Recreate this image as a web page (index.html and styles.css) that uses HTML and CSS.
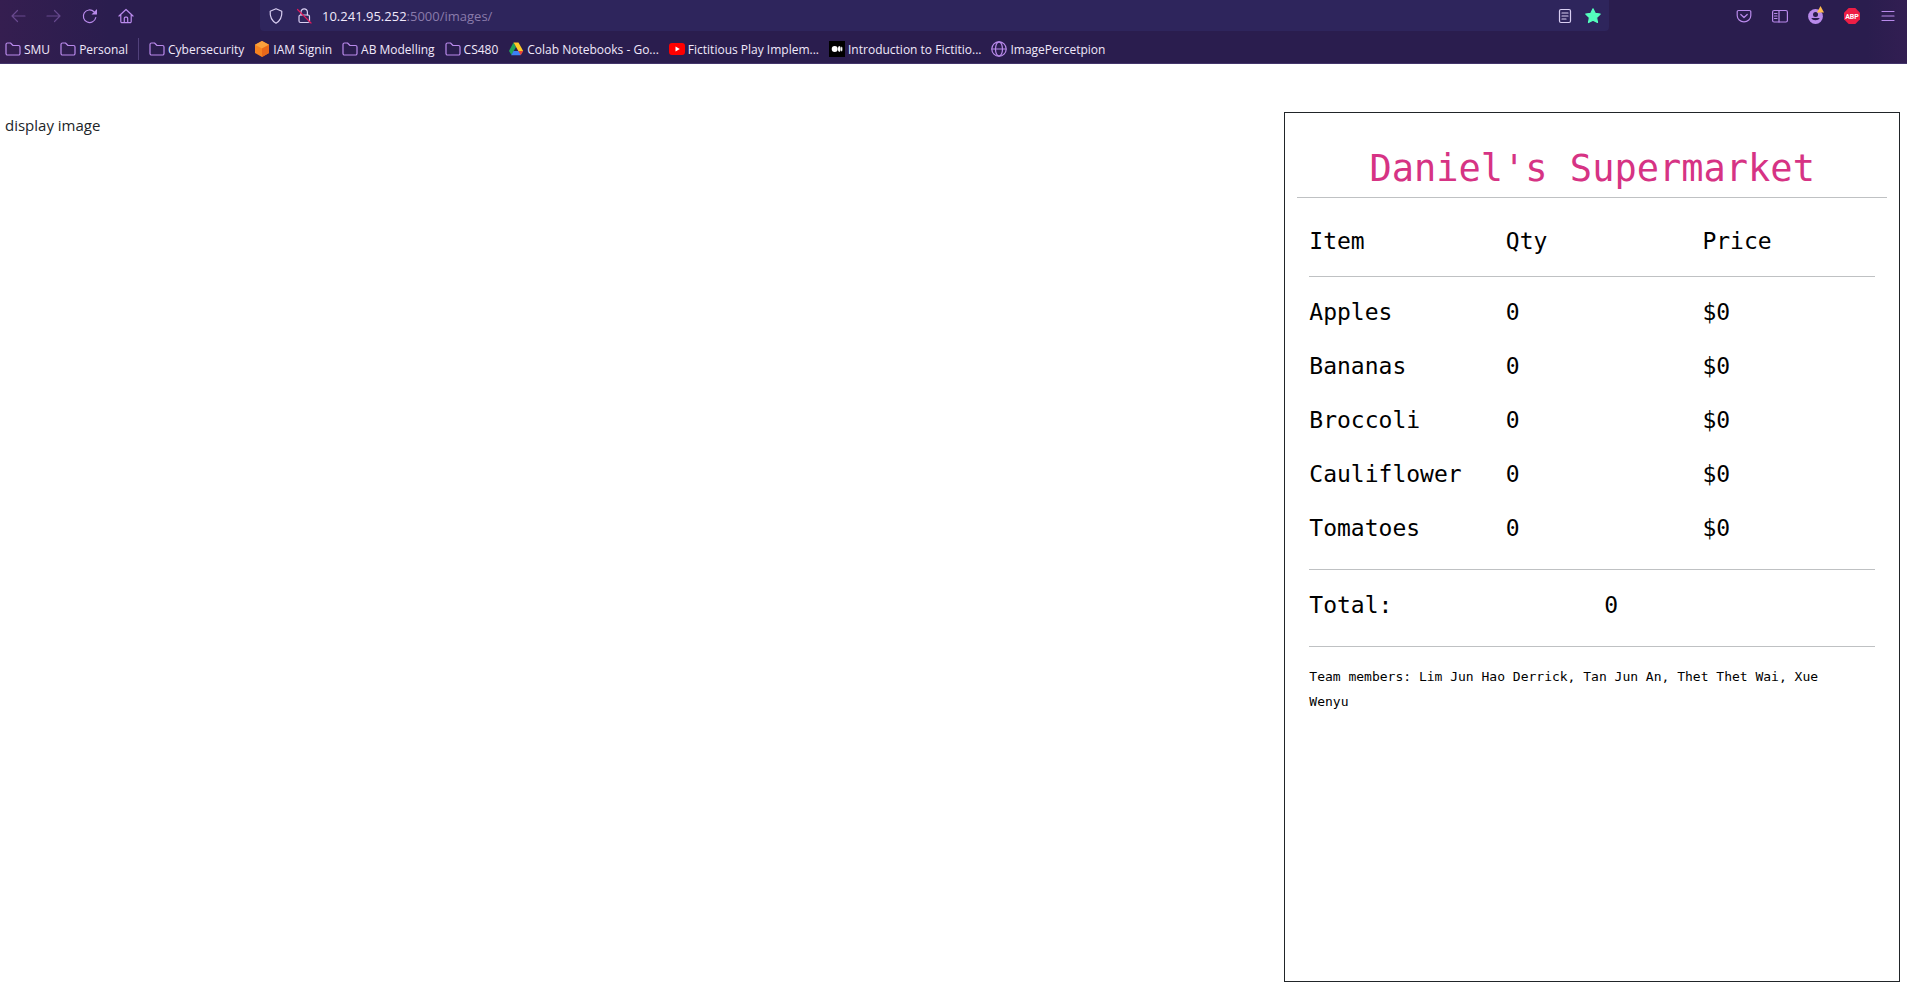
FILE: index.html
```html
<!DOCTYPE html>
<html lang="en">
<head>
<meta charset="utf-8">
<title>Daniel's Supermarket</title>
<link rel="stylesheet" href="styles.css">
</head>
<body>
<svg class="defs" aria-hidden="true">
  <symbol id="folder" viewBox="0 0 16 16"><path d="M1 12.500V3.500A1.500 1.500 0 0 1 2.500 2H5.500L8 4.500H13.500A1.500 1.500 0 0 1 15 6V12.500A1.500 1.500 0 0 1 13.500 14H2.500A1.500 1.500 0 0 1 1 12.500Z"/></symbol>
</svg>
<header class="chrome">
  <div class="toolbar">
    <nav class="tools tools-left">
      <button class="tool dim" aria-label="Back"><svg class="icon" viewBox="0 0 16 16"><path d="M15 8H2M7.500 2.500L2 8L7.500 13.500"/></svg></button>
      <button class="tool dim" aria-label="Forward"><svg class="icon" viewBox="0 0 16 16"><path d="M1 8H14M8.500 2.500L14 8L8.500 13.500"/></svg></button>
      <button class="tool" aria-label="Reload"><svg class="icon" viewBox="0 0 16 16"><path d="M13.800 9.500A6.300 6.300 0 1 1 12 3.700"/><path class="solid" d="M15 1V6.500H9.500Z"/></svg></button>
      <button class="tool" aria-label="Home"><svg class="icon" viewBox="0 0 16 16"><path d="M1 8L8 1.500L15 8M2.800 6.800V13.500A1.200 1.200 0 0 0 4 14.700H12A1.200 1.200 0 0 0 13.200 13.500V6.800M6.300 14.500V10.200A1 1 0 0 1 7.300 9.200H8.700A1 1 0 0 1 9.700 10.200V14.500"/></svg></button>
    </nav>
    <div class="urlbar">
      <button class="site" aria-label="Tracking protection"><svg class="icon pale" viewBox="0 0 16 16"><path d="M8 .8L13.800 3.200C14.200 8.500 12.500 12.500 8 15.200C3.500 12.500 1.800 8.500 2.200 3.200Z"/></svg></button>
      <button class="site" aria-label="Connection is not secure"><svg class="icon pale" viewBox="0 0 16 16"><rect x="3" y="7" width="10.500" height="7.500" rx="1.500"/><path d="M5 7V4A3.200 3.200 0 0 1 11.400 4V7"/><path class="slash" d="M1.500 1.500L15 15"/></svg></button>
      <div class="address" role="textbox" aria-label="Address" tabindex="0">10.241.95.252<span class="path">:5000/images/</span></div>
      <button class="site" aria-label="Reader view"><svg class="icon pale" viewBox="0 0 16 16"><rect x="2.500" y="1.500" width="11" height="13" rx="1.500"/><path d="M5 5H11M5 8H11M5 11H9"/></svg></button>
      <button class="site" aria-label="Edit bookmark"><svg class="icon" viewBox="0 0 16 16"><path class="star" d="M8 .8L10.200 5.300L15.200 6L11.600 9.500L12.500 14.500L8 12.200L3.500 14.500L4.400 9.500L.8 6L5.800 5.300Z"/></svg></button>
    </div>
    <nav class="tools tools-right">
      <button class="tool" aria-label="Pocket"><svg class="icon" viewBox="0 0 16 16"><path d="M2.500 2.500H13.500A1.300 1.300 0 0 1 14.800 3.800V7.500A6.800 6.300 0 0 1 1.200 7.500V3.800A1.300 1.300 0 0 1 2.500 2.500ZM4.800 6.500L8 9.500L11.200 6.500"/></svg></button>
      <button class="tool" aria-label="Sidebars"><svg class="icon" viewBox="0 0 16 16"><rect x=".6" y="2.500" width="14.800" height="11.500" rx="1.500"/><path d="M7 2.500V14M2.500 5.500H5M2.500 8H5M2.500 10.500H5"/></svg></button>
      <button class="tool" aria-label="Account"><svg class="icon" viewBox="0 0 16 16"><circle class="solid" cx="7.500" cy="8.500" r="7.400"/><circle class="hole" cx="7.500" cy="6.500" r="2.500"/><path class="hole" d="M3.200 10H11.800A4.600 3.500 0 0 1 3.200 10Z"/><path class="warn" d="M12.500 -2L16 4.500H9Z"/></svg></button>
      <button class="tool" aria-label="Adblock Plus"><svg class="icon" viewBox="0 0 16 16"><path class="abp" d="M4.700 0H11.300L16 4.700V11.300L11.300 16H4.700L0 11.300V4.700Z"/><text class="abp-text" x="8" y="10.600">ABP</text></svg></button>
      <button class="tool" aria-label="Menu"><svg class="icon" viewBox="0 0 16 16"><path d="M2 3.500H14M2 8H14M2 12.500H14"/></svg></button>
    </nav>
  </div>
  <nav class="bookmarks" aria-label="Bookmarks">
    <a class="bookmark" href="#"><svg class="icon"><use href="#folder"/></svg>SMU</a>
    <a class="bookmark" href="#"><svg class="icon"><use href="#folder"/></svg>Personal</a>
    <span class="divider"></span>
    <a class="bookmark" href="#"><svg class="icon"><use href="#folder"/></svg>Cybersecurity</a>
    <a class="bookmark" href="#"><svg class="icon flat" viewBox="0 0 16 16"><path fill="#f58220" d="M8 0L15 3.800V12L8 16L1 12V3.800Z"/><path fill="#f9a03c" d="M8 0L15 3.800L8 7.500L1 3.800Z"/><path fill="#e8681a" d="M15 3.800V12L8 16V7.500Z"/></svg>IAM Signin</a>
    <a class="bookmark" href="#"><svg class="icon"><use href="#folder"/></svg>AB Modelling</a>
    <a class="bookmark" href="#"><svg class="icon"><use href="#folder"/></svg>CS480</a>
    <a class="bookmark" href="#"><svg class="icon flat" viewBox="0 0 16 16"><path fill="#20a55a" d="M5.500 1.500L8 6L3.500 14L1 10Z"/><path fill="#ffc928" d="M5.500 1.500H10.500L15.200 10H10.300Z"/><path fill="#3d82f5" d="M5.500 10H15L12.500 14.300H3.200Z"/><path fill="#e94335" d="M10.300 10H15.200L12.700 14.300Z"/></svg>Colab Notebooks - Go...</a>
    <a class="bookmark" href="#"><svg class="icon flat" viewBox="0 0 16 16"><rect fill="#f00" y="2" width="16" height="12" rx="3"/><path fill="#fff" d="M6.500 5.500L10.800 8L6.500 10.500Z"/></svg>Fictitious Play Implem...</a>
    <a class="bookmark" href="#"><svg class="icon flat" viewBox="0 0 16 16"><path fill="#000" d="M0 0H16V16H0Z"/><circle fill="#fff" cx="5.700" cy="8" r="3"/><ellipse fill="#fff" cx="10.300" cy="8" rx="1.400" ry="2.900"/><ellipse fill="#fff" cx="12.700" cy="8" rx=".7" ry="2.500"/></svg>Introduction to Fictitio...</a>
    <a class="bookmark" href="#"><svg class="icon" viewBox="0 0 16 16"><circle cx="8" cy="8" r="7.200"/><ellipse cx="8" cy="8" rx="3.500" ry="7.200"/><path d="M1 8H15"/></svg>ImagePercetpion</a>
  </nav>
</header>
<main class="page">
  <section class="viewer">display image</section>
  <section class="receipt">
    <h1 class="shop">Daniel's Supermarket</h1>
    <table class="items">
      <thead>
        <tr><th colspan="2">Item</th><th colspan="2">Qty</th><th colspan="2">Price</th></tr>
        <tr class="rule rule-head"><td colspan="6"><hr></td></tr>
      </thead>
      <tbody>
        <tr><td colspan="2">Apples</td><td colspan="2">0</td><td colspan="2">$0</td></tr>
        <tr><td colspan="2">Bananas</td><td colspan="2">0</td><td colspan="2">$0</td></tr>
        <tr><td colspan="2">Broccoli</td><td colspan="2">0</td><td colspan="2">$0</td></tr>
        <tr><td colspan="2">Cauliflower</td><td colspan="2">0</td><td colspan="2">$0</td></tr>
        <tr><td colspan="2">Tomatoes</td><td colspan="2">0</td><td colspan="2">$0</td></tr>
      </tbody>
      <tfoot>
        <tr class="rule"><td colspan="6"><hr></td></tr>
        <tr><th colspan="3">Total:</th><td colspan="3">0</td></tr>
        <tr class="rule"><td colspan="6"><hr></td></tr>
      </tfoot>
    </table>
    <p class="team">Team members: Lim Jun Hao Derrick, Tan Jun An, Thet Thet Wai, Xue Wenyu</p>
  </section>
</main>
</body>
</html>
```
FILE: styles.css
```css
* {
  box-sizing: border-box;
}

body {
  margin: 0;
  min-height: 100vh;
  display: flex;
  flex-direction: column;
  background: #fff;
  color: #212529;
  font-family: "Open Sans", "Noto Sans", sans-serif;
  font-size: 15px;
}

button {
  padding: 0;
  border: 0;
  background: none;
  color: inherit;
  display: flex;
  align-items: center;
  justify-content: center;
}

.defs {
  display: none;
}

.icon {
  width: 16px;
  height: 16px;
  flex: none;
  overflow: visible;
  fill: none;
  stroke: #b98aeb;
  stroke-width: 1.2;
  stroke-linecap: round;
  stroke-linejoin: round;
}

.pale { stroke: #d9cff2; }
.flat { stroke: none; }
.solid { fill: #b98aeb; stroke: none; }
.slash { stroke: #e3195c; }
.star { fill: #54ffbd; stroke: #54ffbd; }
.hole { fill: #2a1d4e; stroke: none; }
.warn { fill: #ffbd4f; stroke: none; }
.abp { fill: #ed1e45; stroke: none; }

.abp-text {
  fill: #fff;
  stroke: none;
  font: bold 7px "Roboto", sans-serif;
  text-anchor: middle;
}

.chrome {
  background: linear-gradient(90deg, #351e50 0, #2a1d4e 110px, #2a1d4e calc(100% - 40px), #321e52 100%);
  border-bottom: 1px solid #43356b;
  color: #f1e9fb;
}

.toolbar {
  height: 31px;
  display: flex;
  justify-content: space-between;
}

.tools {
  display: flex;
}

.tools-left {
  width: 260px;
}

.tools-right {
  padding: 0 1px 0 117px;
}

.tool {
  width: 36px;
}

.dim {
  opacity: 0.4;
}

.urlbar {
  flex: 1;
  display: flex;
  align-items: center;
  padding: 0 2px;
  border-radius: 0 0 4px 4px;
  background: #2e255c;
}

.site {
  width: 28px;
  height: 28px;
}

.address {
  flex: 1;
  padding-left: 4px;
  font-size: 13px;
}

.path {
  color: #8a7bab;
}

.bookmarks {
  height: 32px;
  display: flex;
  align-items: center;
  gap: 10px;
  padding: 4px 5px 0;
  font-size: 12px;
}

.bookmark {
  display: flex;
  align-items: center;
  gap: 3px;
  color: inherit;
  text-decoration: none;
  white-space: nowrap;
}

.divider {
  width: 1px;
  height: 22px;
  background: #51417b;
}

.page {
  flex: 1;
  display: grid;
  grid-template-columns: 2fr 1fr;
  padding: 48px 0 10px;
}

.viewer {
  padding: 0 5px;
  line-height: 26px;
}

.receipt {
  margin: 0 7px 0 13px;
  padding: 29px 12px 0;
  border: 1px solid #212529;
  color: #000;
  font-family: "DejaVu Sans Mono", monospace;
}

.shop {
  margin: 0 0 16px;
  padding-bottom: 2px;
  border-bottom: 1px solid #bfc1c3;
  color: #d63384;
  font-size: 37px;
  font-weight: 400;
  line-height: 53px;
  text-align: center;
}

.items {
  width: 100%;
  table-layout: fixed;
  border-collapse: collapse;
  font-size: 23px;
  line-height: 38px;
  text-align: left;
}

.items th,
.items td {
  padding: 8px 12px;
  font-weight: 400;
}

.items .rule td {
  padding: 14px 12px 8px;
}

.items .rule-head td {
  padding: 8px 12px;
}

.items hr {
  margin: 0;
  border: 0;
  height: 1px;
  background: #bfc1c3;
}

.team {
  margin: 0;
  padding: 9px 24px 0 12px;
  font-size: 13px;
  line-height: 25px;
}
```
